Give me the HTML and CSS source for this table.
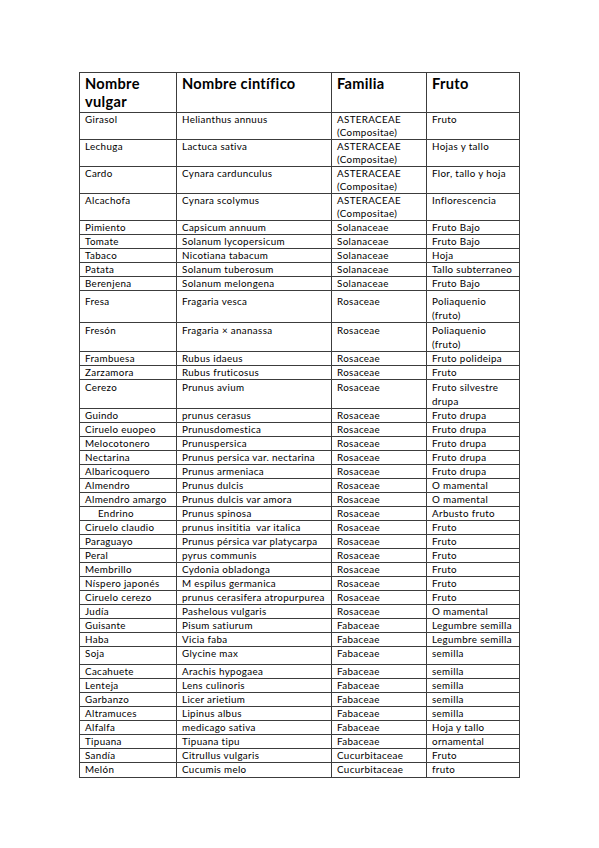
FILE: index.html
```html
<!DOCTYPE html>
<html lang="es">
<head>
<meta charset="utf-8">
<title>Plantas</title>
<link rel="stylesheet" href="styles.css">
</head>
<body>
<div class="page">
<table class="plants">
<colgroup>
<col class="c1"><col class="c2"><col class="c3"><col class="c4">
</colgroup>
<thead>
<tr class="head"><th>Nombre<br>vulgar</th><th>Nombre cintífico</th><th>Familia</th><th>Fruto</th></tr>
</thead>
<tbody>
<tr class="two"><td>Girasol</td><td>Helianthus annuus</td><td>ASTERACEAE<br>(Compositae)</td><td>Fruto</td></tr>
<tr class="two"><td>Lechuga</td><td>Lactuca sativa</td><td>ASTERACEAE<br>(Compositae)</td><td>Hojas y tallo</td></tr>
<tr class="two"><td>Cardo</td><td>Cynara cardunculus</td><td>ASTERACEAE<br>(Compositae)</td><td>Flor, tallo y hoja</td></tr>
<tr class="two"><td>Alcachofa</td><td>Cynara scolymus</td><td>ASTERACEAE<br>(Compositae)</td><td>Inflorescencia</td></tr>
<tr><td>Pimiento</td><td>Capsicum annuum</td><td>Solanaceae</td><td>Fruto Bajo</td></tr>
<tr><td>Tomate</td><td>Solanum lycopersicum</td><td>Solanaceae</td><td>Fruto Bajo</td></tr>
<tr><td>Tabaco</td><td>Nicotiana tabacum</td><td>Solanaceae</td><td>Hoja</td></tr>
<tr><td>Patata</td><td>Solanum tuberosum</td><td>Solanaceae</td><td>Tallo subterraneo</td></tr>
<tr><td>Berenjena</td><td>Solanum melongena</td><td>Solanaceae</td><td>Fruto Bajo</td></tr>
<tr class="two wide first"><td>Fresa</td><td>Fragaria vesca</td><td>Rosaceae</td><td>Poliaquenio<br>(fruto)</td></tr>
<tr class="two wide"><td>Fresón</td><td>Fragaria × ananassa</td><td>Rosaceae</td><td>Poliaquenio<br>(fruto)</td></tr>
<tr><td>Frambuesa</td><td>Rubus idaeus</td><td>Rosaceae</td><td>Fruto polideipa</td></tr>
<tr><td>Zarzamora</td><td>Rubus fruticosus</td><td>Rosaceae</td><td>Fruto</td></tr>
<tr class="two wide"><td>Cerezo</td><td>Prunus avium</td><td>Rosaceae</td><td>Fruto silvestre<br>drupa</td></tr>
<tr><td>Guindo</td><td>prunus cerasus</td><td>Rosaceae</td><td>Fruto drupa</td></tr>
<tr><td>Ciruelo euopeo</td><td>Prunusdomestica</td><td>Rosaceae</td><td>Fruto drupa</td></tr>
<tr><td>Melocotonero</td><td>Prunuspersica</td><td>Rosaceae</td><td>Fruto drupa</td></tr>
<tr><td>Nectarina</td><td>Prunus persica var. nectarina</td><td>Rosaceae</td><td>Fruto drupa</td></tr>
<tr><td>Albaricoquero</td><td>Prunus armeniaca</td><td>Rosaceae</td><td>Fruto drupa</td></tr>
<tr><td>Almendro</td><td>Prunus dulcis</td><td>Rosaceae</td><td>O mamental</td></tr>
<tr><td>Almendro amargo</td><td>Prunus dulcis var amora</td><td>Rosaceae</td><td>O mamental</td></tr>
<tr><td class="indent">Endrino</td><td>Prunus spinosa</td><td>Rosaceae</td><td>Arbusto fruto</td></tr>
<tr><td>Ciruelo claudio</td><td>prunus insititia&nbsp; var italica</td><td>Rosaceae</td><td>Fruto</td></tr>
<tr><td>Paraguayo</td><td>Prunus pérsica var platycarpa</td><td>Rosaceae</td><td>Fruto</td></tr>
<tr><td>Peral</td><td>pyrus communis</td><td>Rosaceae</td><td>Fruto</td></tr>
<tr><td>Membrillo</td><td>Cydonia obladonga</td><td>Rosaceae</td><td>Fruto</td></tr>
<tr><td>Níspero japonés</td><td>M espilus germanica</td><td>Rosaceae</td><td>Fruto</td></tr>
<tr><td>Ciruelo cerezo</td><td>prunus cerasifera atropurpurea</td><td>Rosaceae</td><td>Fruto</td></tr>
<tr><td>Judía</td><td>Pashelous vulgaris</td><td>Rosaceae</td><td>O mamental</td></tr>
<tr><td>Guisante</td><td>Pisum satiurum</td><td>Fabaceae</td><td>Legumbre semilla</td></tr>
<tr><td>Haba</td><td>Vicia faba</td><td>Fabaceae</td><td>Legumbre semilla</td></tr>
<tr class="tall"><td>Soja</td><td>Glycine max</td><td>Fabaceae</td><td>semilla</td></tr>
<tr><td>Cacahuete</td><td>Arachis hypogaea</td><td>Fabaceae</td><td>semilla</td></tr>
<tr><td>Lenteja</td><td>Lens culinoris</td><td>Fabaceae</td><td>semilla</td></tr>
<tr><td>Garbanzo</td><td>Licer arietium</td><td>Fabaceae</td><td>semilla</td></tr>
<tr><td>Altramuces</td><td>Lipinus albus</td><td>Fabaceae</td><td>semilla</td></tr>
<tr><td>Alfalfa</td><td>medicago sativa</td><td>Fabaceae</td><td>Hoja y tallo</td></tr>
<tr><td>Tipuana</td><td>Tipuana tipu</td><td>Fabaceae</td><td>ornamental</td></tr>
<tr><td>Sandía</td><td>Citrullus vulgaris</td><td>Cucurbitaceae</td><td>Fruto</td></tr>
<tr class="last"><td>Melón</td><td>Cucumis melo</td><td>Cucurbitaceae</td><td>fruto</td></tr>
</tbody>
</table>
</div>
</body>
</html>
```

FILE: styles.css
```css
html, body {
  margin: 0;
  padding: 0;
  background: #ffffff;
}

.page {
  width: 599px;
  min-height: 848px;
  padding: 72px 0 0 79px;
  box-sizing: border-box;
}

.plants {
  border-collapse: collapse;
  table-layout: fixed;
  width: 440px;
  font-family: Lato, "Open Sans", sans-serif;
  color: #000000;
}

.c1 { width: 97px; }
.c2 { width: 155px; }
.c3 { width: 95px; }
.c4 { width: 93px; }

.plants th,
.plants td {
  border: 1px solid #3c3c3c;
  padding: 0 1px 0 5px;
  vertical-align: top;
  text-align: left;
  white-space: nowrap;
  overflow: hidden;
}

.plants th {
  font-size: 14.6px;
  font-weight: 700;
  letter-spacing: 0.3px;
  line-height: 18px;
  height: 37px;
  padding-top: 2px;
}

.plants td {
  font-size: 9.8px;
  line-height: 13px;
  letter-spacing: 0.35px;
  height: 13px;
}

.plants tr.two td {
  height: 26px;
}

.plants tr.wide td {
  line-height: 14px;
  height: 28px;
}

.plants tr.first td {
  padding-top: 3px;
}

.plants tr.tall td {
  height: 17px;
}

.plants tr.last td {
  height: 14px;
}

.plants td.indent {
  padding-left: 18px;
}
```
